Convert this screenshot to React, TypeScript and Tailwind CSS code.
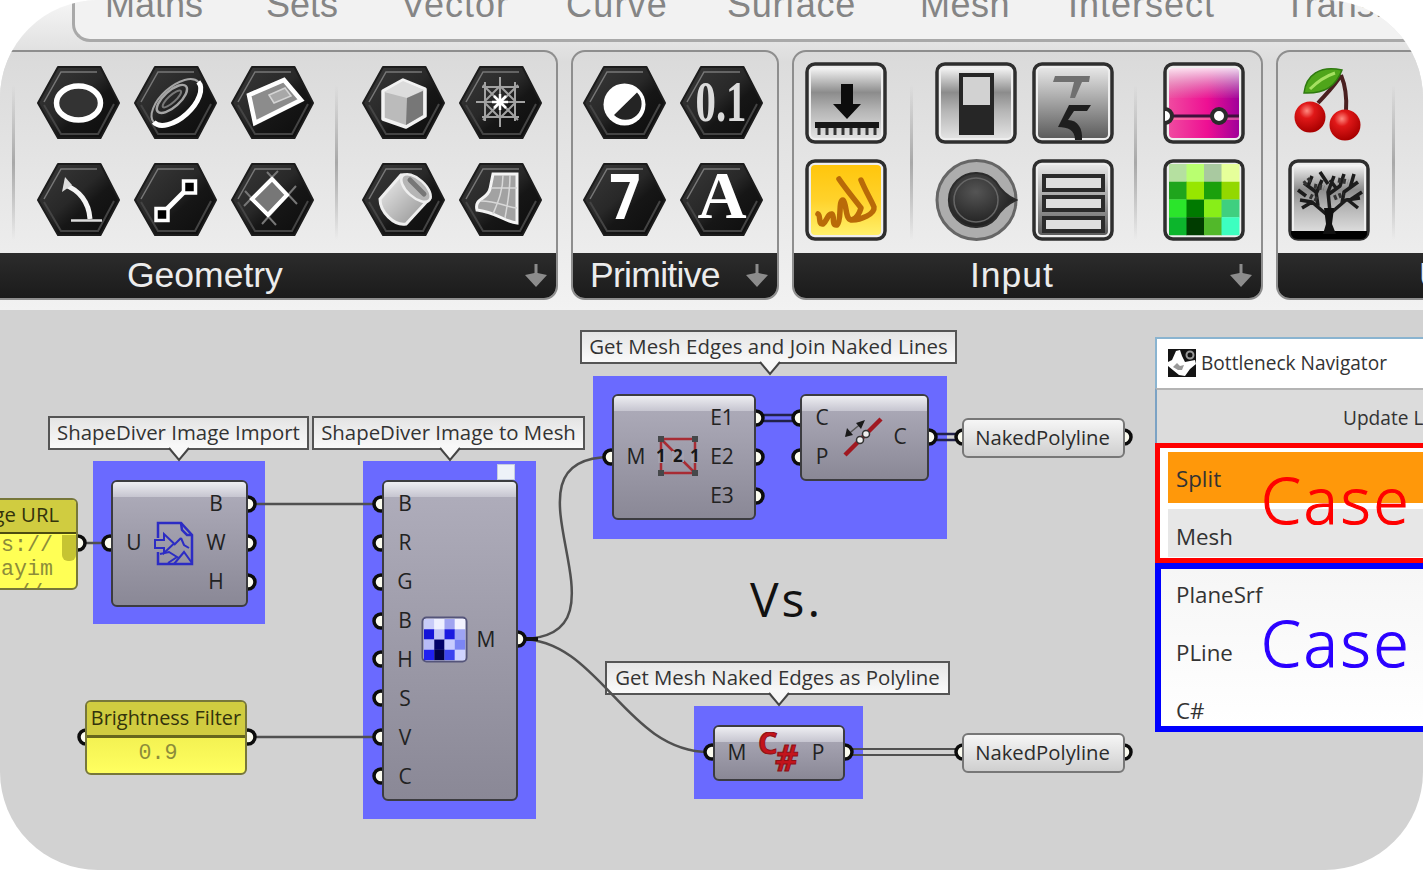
import React from "react";

type IconProps = { children?: React.ReactNode };

const tabs = [
  { name: "Maths", width: "w-[161px]" },
  { name: "Sets", width: "w-[135px]" },
  { name: "Vector", width: "w-[165px] tracking-[1px]" },
  { name: "Curve", width: "w-[161px] tracking-[1.2px]" },
  { name: "Surface", width: "w-[193px] tracking-[0.7px]" },
  { name: "Mesh", width: "w-[148px] tracking-[0.5px]" },
  { name: "Intersect", width: "w-[216px] tracking-[1px]" },
  { name: "Transform", width: "w-[180px]" },
];

// Shared gradients, referenced by every icon on the page
const Defs = () => (
  <svg className="absolute h-0 w-0">
    <defs>
      <linearGradient id="hex" x1="0" y1="0" x2="1" y2="1">
        <stop offset="0" stopColor="#3a3a3a" />
        <stop offset="0.45" stopColor="#282828" />
        <stop offset="0.6" stopColor="#161616" />
        <stop offset="1" stopColor="#0c0c0c" />
      </linearGradient>
      <linearGradient id="steel" x1="0" y1="0" x2="0" y2="1">
        <stop offset="0" stopColor="#f4f4f4" />
        <stop offset="0.35" stopColor="#8c8c8c" />
        <stop offset="0.6" stopColor="#b4b4b4" />
        <stop offset="1" stopColor="#e2e2e2" />
      </linearGradient>
      <linearGradient id="dark" x1="0" y1="0" x2="0" y2="1">
        <stop offset="0" stopColor="#e6e6e6" />
        <stop offset="1" stopColor="#5c5c5c" />
      </linearGradient>
      <linearGradient id="gold" x1="0" y1="0" x2="0" y2="1">
        <stop offset="0" stopColor="#ffc60c" />
        <stop offset="0.5" stopColor="#ffd22b" />
        <stop offset="1" stopColor="#fff06a" />
      </linearGradient>
      <linearGradient id="pink" x1="0" y1="0" x2="1" y2="0">
        <stop offset="0" stopColor="#f04aa0" />
        <stop offset="0.55" stopColor="#ee0f93" />
        <stop offset="1" stopColor="#a0009a" />
      </linearGradient>
      <linearGradient id="shine" x1="0" y1="0" x2="0" y2="1">
        <stop offset="0" stopColor="#fff" stopOpacity="0.85" />
        <stop offset="1" stopColor="#ccc" stopOpacity="0.05" />
      </linearGradient>
      <radialGradient id="cherry" cx="0.4" cy="0.3" r="0.7">
        <stop offset="0" stopColor="#ff8a80" />
        <stop offset="0.35" stopColor="#e01818" />
        <stop offset="1" stopColor="#a80000" />
      </radialGradient>
      <radialGradient id="knob" cx="0.4" cy="0.35" r="0.7">
        <stop offset="0" stopColor="#555" />
        <stop offset="1" stopColor="#1a1a1a" />
      </radialGradient>
      <linearGradient id="solid" x1="0" y1="0" x2="1" y2="1">
        <stop offset="0" stopColor="#f0f0f0" />
        <stop offset="1" stopColor="#8d8d8d" />
      </linearGradient>
    </defs>
  </svg>
);

const Hex: React.FC<IconProps> = ({ children }) => (
  <svg className="size-[83px]" viewBox="0 0 83 83" fill="none">
    <path d="M1 42 21 6H63.500L82 42 63.500 77H21Z" fill="url(#hex)" stroke="#1c1c1c" strokeWidth="2" strokeLinejoin="round" />
    <path d="M7 41 24 11H60" stroke="#777" strokeWidth="1.500" />
    <path d="M7 44 24 73H61L77 43" stroke="#444" strokeWidth="2" />
    {children}
  </svg>
);

const Square: React.FC<IconProps & { fill: string }> = ({ children, fill }) => (
  <svg className="size-[83px]" viewBox="0 0 83 83" fill="none">
    <rect x="2" y="3" width="78" height="78" rx="8" fill="#eee" stroke="#2e2e2e" strokeWidth="3.500" />
    <rect x="6" y="7" width="70" height="70" rx="4" fill={fill} />
    {children}
  </svg>
);

const Divider = () => (
  <div className="mt-6 h-[155px] w-[3px] shrink-0 bg-linear-to-b from-transparent via-[#a8a8a8] to-transparent" />
);

const IconGrid: React.FC<IconProps & { className: string }> = ({ children, className }) => (
  <div className={`grid shrink-0 grid-flow-col grid-rows-2 gap-[14px] self-start ${className}`}>{children}</div>
);

const Panel: React.FC<IconProps & { className: string; title: React.ReactNode; arrow?: boolean }> = ({
  children,
  className,
  title,
  arrow = true,
}) => (
  <section className={`flex h-[250px] shrink-0 flex-col overflow-hidden border-2 border-[#8e8e8e] bg-linear-to-b from-[#dadada] to-[#f1f1f1] ${className}`}>
    <div className="flex h-[201px] pt-[9px]">{children}</div>
    <div className="flex flex-1 items-center justify-between bg-linear-to-b from-[#2c2c2c] to-[#1b1b1b] pr-2 text-[35.5px] leading-none text-[#ececec]">
      {title}
      {arrow && (
        <svg className="h-[26px] w-6" viewBox="0 0 24 26" fill="#8c8c8c">
          <path d="M10.500 1h3v9l9.500 2-11 12L1 12l9.500-2Z" />
        </svg>
      )}
    </div>
  </section>
);

const GeometryIcons = () => (
  <>
    <IconGrid className="ml-[22px]">
      <Hex>
        <ellipse cx="41.500" cy="42" rx="22" ry="17" fill="#333" stroke="#fff" strokeWidth="5.500" />
      </Hex>
      <Hex>
        <path d="M28 27C42 32 52 44 53 61" stroke="#f4f4f4" strokeWidth="5" />
        <path d="M28 19 25 34 35 27Z" fill="#ddd" />
        <path d="M34 62.500H65" stroke="#ddd" strokeWidth="2.500" />
      </Hex>
      <Hex>
        <g transform="rotate(-42 42 41)">
          <ellipse cx="42" cy="41" rx="30" ry="15" stroke="#a5a5a5" strokeWidth="2" />
          <path d="M12 41A30 16 0 0 0 72 41" stroke="#fff" strokeWidth="5" />
          <ellipse cx="41" cy="36" rx="19" ry="8" stroke="#a5a5a5" strokeWidth="2.500" />
          <ellipse cx="41" cy="36" rx="12" ry="3.500" stroke="#777" strokeWidth="2" />
        </g>
      </Hex>
      <Hex>
        <path d="M28 56 55 29" stroke="#fff" strokeWidth="5" />
        <path d="M22 50.500h12v12H22ZM49.500 23h12v12h-12Z" fill="#000" stroke="#fff" strokeWidth="3.500" />
      </Hex>
      <Hex>
        <path d="M18 34 53 19 70 39 24 62Z" fill="#8c8c8c" stroke="#fff" strokeWidth="4.500" />
        <path d="M38 34 54 27 60 35 43 42Z" fill="#a8a8a8" stroke="#d4d4d4" strokeWidth="1.500" />
      </Hex>
      <Hex>
        <path d="M47 13 13 48M36 14 66 46M65 28 31 66M14 33 45 67" stroke="#777" strokeWidth="2" />
        <path d="M41 21 56 37 37 57 21 41Z" fill="#777" stroke="#fff" strokeWidth="4" />
      </Hex>
    </IconGrid>
    <div className="w-[21px]" />
    <Divider />
    <IconGrid className="ml-[24px]">
      <Hex>
        <path d="M21 30 41 19 63 28V55L44 66 21 58Z" fill="#bbb" stroke="#f2f2f2" strokeWidth="3.500" strokeLinejoin="round" />
        <path d="M22 31 41 20 62 29 45 37Z" fill="#dcdcdc" />
        <path d="M45 37 61 30V54L44 64Z" fill="#777" />
      </Hex>
      <Hex>
        <path d="M18 41 39 17C50 15 67 28 68 40L44 66C32 68 18 54 18 41Z" fill="url(#solid)" stroke="#efefef" strokeWidth="3" />
        <ellipse cx="54" cy="30" rx="18" ry="9" transform="rotate(42 54 30)" fill="#b5b5b5" stroke="#eee" strokeWidth="2.500" />
        <path d="M48 22 62 36" stroke="#777" strokeWidth="5" strokeLinecap="round" />
      </Hex>
      <Hex>
        <path d="M23 26H60M17 41H66M23 56H60M26 21V60M41 16V66M56 21V60M24 24 59 59M59 24 24 59M41 25 25 41 41 57 57 41Z" stroke="#a2a2a2" strokeWidth="2" />
        <path d="M41 33V49M33 41H49M35 35 47 47M47 35 35 47" stroke="#fff" strokeWidth="2.500" />
      </Hex>
      <Hex>
        <path d="M34 16H58V65C46 64 37 54 18 52 15 40 28 42 31 31Z" fill="#a2a2a2" stroke="#f4f4f4" strokeWidth="3" />
        <path d="M44 17C44 34 38 46 34 56M51 17C51 36 48 48 46 60M32 30H58M22 43C38 43 47 49 58 50" stroke="#d8d8d8" strokeWidth="1.500" />
      </Hex>
    </IconGrid>
  </>
);

const PrimitiveIcons = () => (
  <IconGrid className="ml-[9px]">
    <Hex>
      <circle cx="41.500" cy="43.500" r="21" fill="#fff" />
      <path d="M31 54 54 31.500A16 16 0 0 1 31 54Z" fill="#242424" />
    </Hex>
    <Hex>
      <text x="42" y="61" textAnchor="middle" fontSize="62" textLength="31" lengthAdjust="spacingAndGlyphs" className="font-['Open_Sans'] font-bold" fill="#fff">7</text>
    </Hex>
    <Hex>
      <text x="41" y="60" textAnchor="middle" fontSize="57" textLength="51" lengthAdjust="spacingAndGlyphs" className="font-['Liberation_Serif'] font-bold" fill="#dcdcdc">0.1</text>
    </Hex>
    <Hex>
      <text x="42" y="60" textAnchor="middle" fontSize="68" className="font-['Liberation_Serif'] font-bold" fill="#fff">A</text>
    </Hex>
  </IconGrid>
);

const greens = [
  "#b5e0a0", "#b9ff70", "#a9c9a0", "#e6ff9a",
  "#1fa51c", "#97e600", "#1ba00c", "#93d800",
  "#2be52b", "#007a00", "#88ee18", "#3fcf80",
  "#0cb52c", "#003c00", "#52b82a", "#3dffc0",
];
const blues = [
  "#c8ccf8", "#eef0ff", "#a0a4f0", "#f2f2ff",
  "#1414d8", "#c0c4f4", "#1a1ae0", "#9ea4f4",
  "#b8bcf8", "#02026a", "#c8ccff", "#7c86f4",
  "#2020f0", "#000046", "#3c44f0", "#d0d4ff",
];

const InputIcons = () => (
  <>
    <IconGrid className="ml-[11px]">
      <Square fill="url(#steel)">
        <path d="M36 23H48V43H56L42 58 28 43H36Z" fill="#0c0c0c" />
        <path d="M10 61H74V67H10Z" fill="#161616" />
        <path d="M14 67v7M22 67v7M30 67v7M38 67v7M46 67v7M54 67v7M62 67v7M70 67v7" stroke="#333" strokeWidth="3" />
      </Square>
      <Square fill="url(#gold)">
        <path d="M13 56C16 58 13 67 18 66 22 63 23 55 27 56 30 58 26 68 32 67 37 63 33 42 38 42 42 46 40 61 46 62 51 62 55 54 56 50 50 42 40 30 34 21M47 62C56 62 70 56 69 49 66 42 60 32 56 22" stroke="#b96a08" strokeWidth="5.500" strokeLinecap="round" strokeLinejoin="round" />
      </Square>
    </IconGrid>
    <div className="w-[22px]" />
    <Divider />
    <IconGrid className="ml-[22px]">
      <Square fill="url(#steel)">
        <rect x="24" y="12" width="35" height="62" fill="#262626" />
        <rect x="28" y="16" width="27" height="28" fill="#d2d2d2" />
      </Square>
      <svg className="size-[83px]" viewBox="0 0 83 83">
        <circle cx="41.500" cy="42" r="39.500" fill="#adadad" stroke="#666" strokeWidth="3" />
        <path d="M81 42C70 37 65 31 61 24A27 27 0 1 0 61 60C65 53 70 47 81 42Z" fill="url(#knob)" stroke="#2c2c2c" strokeWidth="2" />
        <circle cx="41" cy="42" r="22" fill="none" stroke="#666" strokeWidth="1.500" />
      </svg>
      <Square fill="url(#dark)">
        <path d="M23 15H58L57 21H50L43 37H38L42 21H21Z" fill="#707070" />
        <path d="M37 44H59L55 50H42L36 59C46 59 51 68 50 79H43C43 69 36 66 26 66L34 50Z" fill="#1e1e1e" />
      </Square>
      <Square fill="url(#dark)">
        <path d="M12 18H71V32H12ZM12 39H71V52H12ZM12 60H71V73H12Z" fill="#dedede" stroke="#2b2b2b" strokeWidth="4" />
      </Square>
    </IconGrid>
    <div className="w-[19px]" />
    <Divider />
    <IconGrid className="ml-[26px]">
      <Square fill="url(#pink)">
        <rect x="6" y="7" width="70" height="30" fill="url(#shine)" />
        <path d="M6 54H76V59H6Z" fill="#f9a" fillOpacity="0.5" />
        <path d="M6 55H76" stroke="#40103c" strokeWidth="3" />
        <path d="M2 48A7 7 0 0 1 2 62" fill="#fff" stroke="#2b2b2b" strokeWidth="4" />
        <circle cx="56" cy="55" r="7" fill="#fff" stroke="#2b2b2b" strokeWidth="4" />
      </Square>
      <Square fill="#fff">
        {greens.map((color, i) => (
          <rect key={i} x={6 + (i % 4) * 17.5} y={6 + Math.floor(i / 4) * 17.75} width="18" height="18" fill={color} />
        ))}
      </Square>
    </IconGrid>
  </>
);

const UtilIcons = () => (
  <>
    <IconGrid className="ml-[10px]">
      <svg className="size-[83px]" viewBox="0 0 83 83" fill="none">
        <path d="M53 14C46 26 38 33 30 42M53 14C58 26 59 36 58 50" stroke="#4a2020" strokeWidth="4" />
        <path d="M16 32C18 14 32 4 54 9 48 25 37 33 16 32Z" fill="#4fa51a" stroke="#2f7a10" strokeWidth="1.500" />
        <path d="M22 28C29 21 38 15 47 12" stroke="#a5e060" strokeWidth="3" />
        <circle cx="22" cy="56" r="15.500" fill="url(#cherry)" />
        <circle cx="57" cy="64" r="15.500" fill="url(#cherry)" />
      </svg>
      <Square fill="url(#steel)">
        <path d="M3 73H79V76Q78 81 73 81H10Q4 81 3 76Z" fill="#000" />
        <path d="M38 56 24 44 12 42M44 54 58 42 72 40M30 48 28 34 16 25M28 36 34 22M42 54 40 34 46 18M41 36 52 28 56 16M54 45 56 34 70 24M24 44 14 50M60 42 70 50M18 38 10 32M40 26 32 14M62 30 66 16M48 30 42 22M20 28 24 18M62 42 74 34" stroke="#1c1c1c" strokeWidth="3.500" strokeLinejoin="round" />
        <path d="M16 26 24 20M26 28 36 30M50 22 60 24M46 40 56 36M22 38 30 42" stroke="#333" strokeWidth="5" strokeDasharray="3 2" />
        <path d="M36 50H46L44 66 48 76H35L38 66Z" fill="#111" />
      </Square>
    </IconGrid>
    <div className="w-[21px]" />
    <Divider />
  </>
);

const Ribbon = () => (
  <header className="h-[310px] shrink-0 overflow-hidden bg-linear-to-b from-[#f6f6f6] via-[#dcdcdc] via-20% to-[#f2f2f2] font-['Liberation_Sans',Arial,sans-serif]">
    <div className="h-[50px]">
      <nav className="ml-[72px] flex h-[42px] w-[1400px] rounded-bl-[18px] border-b-3 border-l-3 border-[#a9a9a9] bg-[#f2f2f2] pl-[30px] text-4xl leading-none text-[#858585]">
        {tabs.map((tab) => (
          <span key={tab.name} className={`-mt-[13px] shrink-0 ${tab.width}`}>{tab.name}</span>
        ))}
      </nav>
    </div>
    <div className="flex gap-[13px]">
      <Panel className="w-[558px] rounded-r-[14px] border-l-0" title={<span className="pl-[127px]">Geometry</span>}>
        <div className="w-[12px]" />
        <Divider />
        <GeometryIcons />
      </Panel>
      <Panel className="w-[208px] rounded-[14px]" title={<span className="pl-[17px] tracking-[-0.7px]">Primitive</span>}>
        <div className="w-[1px]" />
        <PrimitiveIcons />
      </Panel>
      <Panel className="w-[471px] rounded-[14px]" title={<span className="pl-[176px] tracking-[1px]">Input</span>}>
        <InputIcons />
      </Panel>
      <Panel className="w-[300px] rounded-[14px]" arrow={false} title={<span className="pl-[141px]">Util</span>}>
        <UtilIcons />
      </Panel>
    </div>
  </header>
);

const Callout: React.FC<{ className: string; children: string }> = ({ className, children }) => (
  <div className={`absolute flex h-[34px] items-center justify-center border-2 border-[#555] bg-linear-to-b from-[#e4e4e4] to-[#fafafa] pb-px text-[20.4px] whitespace-nowrap text-[#333] ${className}`}>
    {children}
  </div>
);

const Capsule: React.FC<IconProps & { className: string }> = ({ className, children }) => (
  <div className={`absolute flex items-center rounded-md border-2 border-[#3c3c40] bg-linear-to-b from-[#b0aebc] to-[#8a8896] text-[21px] text-[#222] ${className}`}>
    <div className="absolute inset-x-0 top-0 h-[15px] rounded-t-sm bg-linear-to-b from-[#eeeef2] to-[#c6c5d0]" />
    {children}
  </div>
);

const Labels: React.FC<{ names: string[]; className: string }> = ({ names, className }) => (
  <div className={`relative flex flex-col pb-0.5 text-center leading-[39px] ${className}`}>
    {names.map((name, i) => (
      <span key={i} className="h-[39px]">{name}</span>
    ))}
  </div>
);

const Param: React.FC<{ className: string }> = ({ className }) => (
  <div className={`absolute left-[962px] flex h-10 w-[163px] items-center justify-center rounded-md border-2 border-[#777] bg-linear-to-b from-[#f6f6f6] to-[#cfcfcf] pr-0.5 pb-0.5 text-[20.3px] text-[#2c2c2c] ${className}`}>
    NakedPolyline
  </div>
);

const ports = [
  [78, 543], [110, 543], [248, 504], [248, 543], [248, 582],
  [381, 504], [381, 543], [381, 582], [381, 621], [381, 659], [381, 698], [381, 737], [381, 776],
  [518, 639], [611, 457], [756, 418], [756, 457], [756, 496],
  [800, 418], [800, 457], [929, 437], [963, 437], [1124, 437],
  [712, 752], [845, 752], [963, 752], [1124, 752],
  [86, 737], [248, 737],
];

const Wires = () => (
  <svg className="absolute inset-0 h-[560px] w-[1423px]" viewBox="0 310 1423 560" fill="none">
    <g stroke="#505050" strokeWidth="2.500">
      <path d="M248 504H381M248 737H381M78 543H110" />
      <path d="M520 639C646 639 486 457 611 457" />
      <path d="M520 639C600 639 625 752 709 752" />
      <path d="M845 749H962M845 755H962" strokeWidth="2" />
      <path d="M756 415H800M756 421H800M929 434H962M929 440H962" stroke="#22224a" />
    </g>
    <path d="M520 639H538" stroke="#111" strokeWidth="4" />
    {ports.map(([x, y], i) => (
      <circle key={i} cx={x} cy={y} r="7" fill="#fbfbef" stroke="#0c0c0c" strokeWidth="3.500" />
    ))}
    {/* callout pointers */}
    {[[179, 449], [450, 449], [770, 363], [779, 694]].map(([x, y]) => (
      <g key={x}>
        <path d={`M${x - 10} ${y - 2}L${x} ${y + 11}L${x + 10} ${y - 2}Z`} fill="#f8f8f8" />
        <path d={`M${x - 10} ${y - 1}L${x} ${y + 11}L${x + 10} ${y - 1}`} stroke="#444" strokeWidth="2" />
      </g>
    ))}
  </svg>
);

const Nodes = () => (
  <>
    <Capsule className="top-[170px] left-[111px] h-[127px] w-[137px]">
      <Labels names={["U"]} className="ml-[12px] w-[18px]" />
      <svg className="relative ml-[11px] h-[46px] w-10" viewBox="0 0 40 46" fill="none" stroke="#2c2cc4" strokeWidth="2.500">
        <path d="M4 17V2H27L38 14V43H4V31" />
        <path d="M27 2 28 9 33 14H38" />
        <path d="M1 19H10V13L20 22.500 10 32V27H1Z" strokeWidth="2" />
        <path d="M6 33 15 31 23 36 14 42M20 43 30 31 38 42M20 24 27 17M27 17 30 24 35 27" strokeWidth="2" />
      </svg>
      <Labels names={["B", "W", "H"]} className="ml-[10px] w-6" />
    </Capsule>

    <div className="absolute top-[154px] left-[497px] h-4 w-[18px] border border-[#c4cce0] bg-[#edf2f8]" />
    <Capsule className="top-[170px] left-[382px] h-[321px] w-[136px]">
      <Labels names={["B", "R", "G", "B", "H", "S", "V", "C"]} className="ml-[11px] w-5" />
      <svg className="relative -mt-0.5 ml-1.5 size-[47px]" viewBox="0 0 47 47">
        <rect x="1.500" y="1.500" width="44" height="44" rx="4" fill="#eceefe" stroke="#55557a" strokeWidth="2" />
        {blues.map((color, i) => (
          <rect key={i} x={3 + (i % 4) * 10.25} y={3 + Math.floor(i / 4) * 10.25} width="10.400" height="10.400" fill={color} />
        ))}
      </svg>
      <Labels names={["M"]} className="ml-1.5 w-6" />
    </Capsule>

    <Capsule className="top-[84px] left-[612px] h-[126px] w-[144px]">
      <Labels names={["M"]} className="ml-[10px] w-6" />
      <svg className="relative -mt-0.5 ml-[9px] size-[42px]" viewBox="0 0 42 42" fill="none">
        <path d="M4 4H38V38H4ZM4 4 38 38" stroke="#a82c34" strokeWidth="2.500" />
        <path d="M1 1H7V7H1ZM35 1H41V7H35ZM1 35H7V41H1ZM35 35H41V41H35Z" fill="#45484a" />
        <path d="M1 15H8V28H1ZM15 16H27V27H15ZM34 15H41V28H34Z" fill="#a3a1af" />
        <text y="27" fontSize="17" className="font-['Open_Sans'] font-bold" fill="#161616">
          <tspan x="-1">1</tspan><tspan x="16">2</tspan><tspan x="33">1</tspan>
        </text>
      </svg>
      <Labels names={["E1", "E2", "E3"]} className="ml-[7px] w-8" />
    </Capsule>

    <Capsule className="top-[84px] left-[800px] h-[87px] w-[129px]">
      <Labels names={["C", "P"]} className="ml-[10px] w-5" />
      <svg className="relative -mt-0.5 ml-[11px] size-10" viewBox="0 0 40 40" fill="none">
        <path d="M2 38 38 2" stroke="#a01820" strokeWidth="4.500" />
        <path d="M3 19 20 5" stroke="#555" strokeWidth="1.500" />
        <path d="M2 20 4 11 10 18ZM13 6 22 3 18 12Z" fill="#1a1a1a" />
        <circle cx="17" cy="23" r="3.500" fill="#eee" stroke="#333" strokeWidth="1.500" />
        <circle cx="23" cy="17" r="3.500" fill="#eee" stroke="#333" strokeWidth="1.500" />
      </svg>
      <Labels names={["C"]} className="ml-[7px] w-5" />
    </Capsule>

    <Capsule className="top-[415px] left-[713px] h-[56px] w-[132px]">
      <Labels names={["M"]} className="ml-[10px] w-6" />
      <svg className="relative ml-[9px] h-[42px] w-[42px]" viewBox="0 0 42 42" fill="#c3141c" stroke="#8c1016">
        <text x="0" y="22" fontSize="31" className="font-['Open_Sans'] font-bold">C</text>
        <text x="17" y="39" fontSize="35" className="font-['Open_Sans'] font-bold italic">#</text>
      </svg>
      <Labels names={["P"]} className="ml-[8px] w-5" />
    </Capsule>

    <Param className="top-[108px]" />
    <Param className="top-[423px]" />

    <div className="absolute top-[188px] -left-10 flex h-[92px] w-[118px] flex-col overflow-hidden rounded-md border-2 border-[#77773a] bg-[#ffff55]">
      <div className="flex h-[34px] items-center justify-end border-b-2 border-[#4c4c10] bg-[#d0cc40] pr-[17px] pb-1 text-[20.3px] whitespace-nowrap text-[#33330c]">Image URL</div>
      <div className="relative -mt-px flex-1 pl-[39px] font-['Liberation_Mono',monospace] text-[21.6px] leading-6 text-[#8c8c3a]">
        <p>s://</p>
        <p>ayim</p>
        <p className="pl-4">//</p>
        <div className="absolute top-0.5 right-0 h-[26px] w-3.5 rounded-b-md bg-[#c6c432]" />
      </div>
    </div>

    <div className="absolute top-[390px] left-[85px] flex h-[75px] w-[162px] flex-col overflow-hidden rounded-md border-2 border-[#77773a] bg-linear-to-b from-[#e8e444] to-[#ffff60]">
      <div className="flex h-[36px] items-center justify-center border-b-3 border-[#66661c] bg-[#d0cc40] pb-0.5 text-[19.9px] text-[#33330c]">Brightness Filter</div>
      <p className="pt-0.5 pr-4 text-center font-['Liberation_Mono',monospace] text-[21.6px] leading-[26px] text-[#8c8c3a]">0.9</p>
    </div>
  </>
);

const Navigator = () => (
  <aside className="absolute top-[27px] left-[1155px] flex h-[395px] w-[300px] flex-col text-[22.3px] whitespace-nowrap text-[#333]">
    <div className="flex h-[51px] items-center border-t-2 border-l-2 border-[#8ab4d0] bg-white pl-[11px] text-[19.1px]">
      <svg className="mr-[5px] -mt-0.5 size-7" viewBox="0 0 28 28">
        <rect width="28" height="28" fill="#141414" />
        <path d="M8 2 12 1 14 7 17 13 27 11 28 15 22 20 17 27 11 26 0 17 0 13 4 11Z" fill="#fff" />
        <path d="M5 18 9 14 12 17 16 16 14 21 10 21Z" fill="#999" />
        <circle cx="22" cy="6" r="3.500" fill="none" stroke="#999" strokeWidth="2" />
      </svg>
      Bottleneck Navigator
    </div>
    <div className="flex h-[55px] items-center border-t-2 border-l-2 border-t-[#b4b4b4] border-l-[#7ba2c4] bg-[#dcdcdc] pt-1 pl-[186px] text-[19.1px]">Update List</div>
    <div className="relative h-[120px] border-[5px] border-[#ff0000] bg-white pt-1 pl-2">
      <div className="flex h-[51px] items-center bg-[#ff980a] pt-0.5 pl-2">Split</div>
      <div className="mt-1.5 flex h-[48px] items-center bg-[#e7e7e7] pt-2 pl-2">Mesh</div>
      <span className="absolute top-[20px] left-[101px] text-[64px] leading-none font-light tracking-[3px] text-[#ff0000] [-webkit-text-stroke:1.2px_#ff0000]">Case 1</span>
    </div>
    <div className="relative flex h-[169px] flex-col border-[6px] border-[#0000ff] bg-linear-to-b from-[#f6f6f6] to-white pl-[15px] leading-[58px]">
      <span className="-mt-[3px]">PlaneSrf</span>
      <span>PLine</span>
      <span>C#</span>
      <span className="absolute top-[42px] left-[100px] text-[64px] leading-none font-light tracking-[3px] text-[#2a00ff] [-webkit-text-stroke:1.2px_#2a00ff]">Case 2</span>
    </div>
  </aside>
);

const Canvas = () => (
  <main className="relative flex-1 bg-[#d2d2d2]">
    <div className="absolute top-[151px] left-[93px] h-[163px] w-[172px] bg-[#6a6aff]" />
    <div className="absolute top-[151px] left-[363px] h-[358px] w-[173px] bg-[#6a6aff]" />
    <div className="absolute top-[66px] left-[593px] h-[163px] w-[354px] bg-[#6a6aff]" />
    <div className="absolute top-[396px] left-[694px] h-[93px] w-[169px] bg-[#6a6aff]" />
    <Callout className="top-[106px] left-[48px] w-[261px]">ShapeDiver Image Import</Callout>
    <Callout className="top-[106px] left-[312px] w-[273px]">ShapeDiver Image to Mesh</Callout>
    <Callout className="top-[20px] left-[580px] w-[377px] tracking-[0.08px]">Get Mesh Edges and Join Naked Lines</Callout>
    <Callout className="top-[351px] left-[605px] w-[345px]">Get Mesh Naked Edges as Polyline</Callout>
    <Wires />
    <Nodes />
    <span className="absolute top-[257px] left-[750px] text-[48px] leading-[64px] tracking-[3px] text-[#111]">Vs.</span>
    <Navigator />
  </main>
);

export default function App() {
  return (
    <div className="flex h-[870px] w-[1423px] flex-col overflow-hidden rounded-[98px] font-['Open_Sans','Noto_Sans',sans-serif]">
      <Defs />
      <Ribbon />
      <Canvas />
    </div>
  );
}
